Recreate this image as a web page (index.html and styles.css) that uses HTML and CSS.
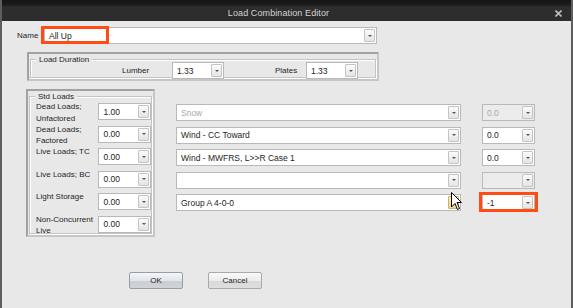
FILE: index.html
```html
<!DOCTYPE html>
<html lang="en">
<head>
    <meta charset="UTF-8">
    <title>Load Combination Editor</title>
    <link rel="stylesheet" href="styles.css">
</head>
<body>

    <div class="window">
        <div class="titlebar">
            <span class="title">Load Combination Editor</span>
            <svg class="close" width="7" height="7" viewBox="0 0 7 7">
                <path d="M0.5 0.5 L6.5 6.5 M6.5 0.5 L0.5 6.5" stroke="#bdbdbd" stroke-width="1.6"/>
            </svg>
        </div>

        <div class="content">
            <div class="name-row">
                <span class="label">Name</span>
                <div class="combo name-combo">
                    <span class="value">All Up</span><span class="arrow"></span>
                    <div class="mark mark-name"></div>
                </div>
            </div>

            <div class="panel duration">
                <div class="group">
                    <span class="legend">Load Duration</span>
                    <div class="duration-row">
                        <span class="label lumber">Lumber</span>
                        <div class="combo small"><span class="value">1.33</span><span class="arrow"></span></div>
                        <span class="label plates">Plates</span>
                        <div class="combo small plates-combo"><span class="value">1.33</span><span class="arrow"></span></div>
                    </div>
                </div>
            </div>

            <div class="lower">
                <div class="panel std">
                    <div class="group">
                        <span class="legend">Std Loads</span>
                        <div class="std-rows">
                            <div class="std-row">
                                <span class="label">Dead Loads;<br>Unfactored</span>
                                <div class="combo small"><span class="value">1.00</span><span class="arrow"></span></div>
                            </div>
                            <div class="std-row">
                                <span class="label">Dead Loads;<br>Factored</span>
                                <div class="combo small"><span class="value">0.00</span><span class="arrow"></span></div>
                            </div>
                            <div class="std-row">
                                <span class="label">Live Loads; TC</span>
                                <div class="combo small"><span class="value">0.00</span><span class="arrow"></span></div>
                            </div>
                            <div class="std-row">
                                <span class="label">Live Loads; BC</span>
                                <div class="combo small"><span class="value">0.00</span><span class="arrow"></span></div>
                            </div>
                            <div class="std-row">
                                <span class="label">Light Storage</span>
                                <div class="combo small"><span class="value">0.00</span><span class="arrow"></span></div>
                            </div>
                            <div class="std-row">
                                <span class="label">Non-Concurrent<br>Live</span>
                                <div class="combo small"><span class="value">0.00</span><span class="arrow"></span></div>
                            </div>
                        </div>
                    </div>
                </div>

                <div class="col cases">
                    <div class="combo wide disabled"><span class="value">Snow</span><span class="arrow"></span></div>
                    <div class="combo wide"><span class="value">Wind - CC Toward</span><span class="arrow"></span></div>
                    <div class="combo wide"><span class="value">Wind - MWFRS, L&gt;&gt;R Case 1</span><span class="arrow"></span></div>
                    <div class="combo wide"><span class="value"></span><span class="arrow"></span></div>
                    <div class="combo wide">
                        <span class="value">Group A 4-0-0</span><span class="arrow hover"></span>
                        <svg class="cursor" width="11" height="19" viewBox="0 0 11 19">
                            <path d="M0.5 0.5 L0.5 15 L4 11.5 L6.5 17.5 L8.5 16.5 L6 10.5 L10.5 10.5 Z" fill="#fff" stroke="#000" stroke-width="1"/>
                        </svg>
                    </div>
                </div>

                <div class="col factors">
                    <div class="combo small grey"><span class="value">0.0</span><span class="arrow"></span></div>
                    <div class="combo small"><span class="value">0.0</span><span class="arrow"></span></div>
                    <div class="combo small"><span class="value">0.0</span><span class="arrow"></span></div>
                    <div class="combo small grey"><span class="value"></span><span class="arrow"></span></div>
                    <div class="combo small">
                        <span class="value">-1</span><span class="arrow"></span>
                        <div class="mark mark-factor"></div>
                    </div>
                </div>
            </div>

            <div class="buttons">
                <button class="btn default">OK</button>
                <button class="btn">Cancel</button>
            </div>
        </div>
    </div>

</body>
</html>
```

FILE: styles.css
```css
body {
    margin: 0;
    width: 573px;
    height: 308px;
    overflow: hidden;
    background: #e8e8e8;
    font-family: "Liberation Sans", Arial, sans-serif;
    font-size: 8px;
    color: #1e1e1e;
}
.window {
    height: 308px;
    box-sizing: border-box;
    border-left: 2px solid #5e5e5e;
    border-right: 2px solid #5e5e5e;
    background: #e8e8e8;
}
.titlebar {
    height: 21px;
    background: linear-gradient(#151515 0, #1c1c1c 5px, #2e2e2e 7px, #2c2c2c 100%);
    display: flex;
    align-items: center;
    justify-content: center;
    position: relative;
}
.title {
    color: #d4d4d4;
    font-size: 9px;
    letter-spacing: 0.1px;
    padding: 4px 16px 0 0;
}
.close {
    position: absolute;
    right: 9px;
    top: 10px;
}
.content {
    padding-top: 6px;
}
.label {
    white-space: nowrap;
}

/* combo boxes */
.combo {
    position: relative;
    height: 17px;
    box-sizing: border-box;
    border: 1px solid #b9b9b9;
    background: #fff;
    display: flex;
    align-items: center;
}
.combo .value {
    flex: 1;
    padding-left: 4px;
    overflow: hidden;
    white-space: nowrap;
    font-size: 8.5px;
}
.arrow {
    width: 11px;
    height: 13px;
    margin-right: 1px;
    box-sizing: border-box;
    border: 1px solid #c4c4c4;
    border-radius: 1px;
    background: linear-gradient(#fbfbfb, #e4e4e4);
    display: flex;
    align-items: center;
    justify-content: center;
}
.arrow::after {
    content: "";
    border-left: 2px solid transparent;
    border-right: 2px solid transparent;
    border-top: 2px solid #555;
}
.arrow.hover {
    background: linear-gradient(#fbeec0, #eed48a);
    border-color: #c9b277;
}
.combo.small { width: 53px; }
.combo.wide { width: 285px; }
.combo.disabled .value { color: #a9a9a9; }
.combo.grey { background: #ececec; }
.combo.grey .value { color: #a9a9a9; }

.mark {
    position: absolute;
    border: 3px solid #ff4b14;
    pointer-events: none;
}
.mark-name {
    left: -4px;
    top: -2px;
    width: 62px;
    height: 12px;
}
.mark-factor {
    left: -4px;
    top: -3px;
    width: 53px;
    height: 14px;
}
.cursor {
    position: absolute;
    left: 274px;
    top: -3px;
}

/* name row */
.name-row {
    display: flex;
    align-items: center;
    padding-left: 15px;
}
.name-row .label {
    width: 27px;
}
.name-combo {
    width: 333px;
}

/* group panels */
.panel {
    box-sizing: border-box;
    border: 2px solid #a2a2a2;
    border-right-color: #c6c6c6;
    border-bottom-color: #c6c6c6;
    padding: 5px 1px 1px 1px;
}
.group {
    position: relative;
    height: 100%;
    box-sizing: border-box;
    border: 1px solid #c4c4c4;
    box-shadow: inset 1px 1px 0 #fff, 1px 1px 0 #fff;
}
.legend {
    position: absolute;
    left: 5px;
    top: -5px;
    padding: 0 3px;
    background: #e8e8e8;
    line-height: 9px;
}

.duration {
    margin: 8px 0 0 25px;
    width: 352px;
    height: 29px;
}
.duration-row {
    display: flex;
    align-items: center;
    padding-top: 2px;
}
.duration-row .label.lumber { margin-left: 91px; width: 50px; }
.duration-row .label.plates { margin-left: 51px; width: 31px; }
.duration-row .combo.small { width: 52px; }

.lower {
    display: flex;
    margin-top: 8px;
}
.std {
    margin-left: 24px;
    width: 129px;
    height: 148px;
}
.std-rows {
    padding: 6px 0 0 6px;
    display: flex;
    flex-direction: column;
    gap: 5.6px;
}
.std-row {
    display: flex;
    align-items: flex-start;
    height: 17px;
}
.std-row .label {
    width: 63px;
    line-height: 11.5px;
    margin-top: -2px;
}
.col {
    display: flex;
    flex-direction: column;
    gap: 5.5px;
    padding-top: 15px;
}
.cases { margin-left: 21px; }
.factors { margin-left: 21px; }

.buttons {
    display: flex;
    gap: 25px;
    padding: 35px 0 0 127px;
}
.btn {
    width: 54px;
    height: 17px;
    border: 1px solid #a9a9a9;
    border-radius: 2px;
    background: linear-gradient(#fafafa 0, #ececec 50%, #d9d9d9 51%, #dedede 100%);
    font-family: "Liberation Sans", Arial, sans-serif;
    font-size: 8px;
    color: #1e1e1e;
    padding: 0;
}
.btn.default {
    background: linear-gradient(#f4f6f8 0, #e2e5e9 50%, #c9ced4 51%, #d0d4d9 100%);
    border-color: #9a9ea3;
}
```
